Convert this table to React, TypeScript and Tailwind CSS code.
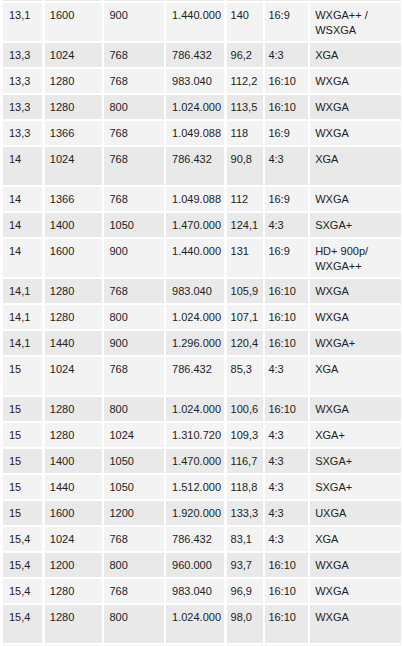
type Row = {
  cells: [string, string, string, string, string, string, string];
  tall?: boolean;
};

const rows: Row[] = [
  { cells: ['13,1', '1600', '900', '1.440.000', '140', '16:9', 'WXGA++ /\nWSXGA'], tall: true },
  { cells: ['13,3', '1024', '768', '786.432', '96,2', '4:3', 'XGA'] },
  { cells: ['13,3', '1280', '768', '983.040', '112,2', '16:10', 'WXGA'] },
  { cells: ['13,3', '1280', '800', '1.024.000', '113,5', '16:10', 'WXGA'] },
  { cells: ['13,3', '1366', '768', '1.049.088', '118', '16:9', 'WXGA'] },
  { cells: ['14', '1024', '768', '786.432', '90,8', '4:3', 'XGA'], tall: true },
  { cells: ['14', '1366', '768', '1.049.088', '112', '16:9', 'WXGA'] },
  { cells: ['14', '1400', '1050', '1.470.000', '124,1', '4:3', 'SXGA+'] },
  { cells: ['14', '1600', '900', '1.440.000', '131', '16:9', 'HD+ 900p/\nWXGA++'], tall: true },
  { cells: ['14,1', '1280', '768', '983.040', '105,9', '16:10', 'WXGA'] },
  { cells: ['14,1', '1280', '800', '1.024.000', '107,1', '16:10', 'WXGA'] },
  { cells: ['14,1', '1440', '900', '1.296.000', '120,4', '16:10', 'WXGA+'] },
  { cells: ['15', '1024', '768', '786.432', '85,3', '4:3', 'XGA'], tall: true },
  { cells: ['15', '1280', '800', '1.024.000', '100,6', '16:10', 'WXGA'] },
  { cells: ['15', '1280', '1024', '1.310.720', '109,3', '4:3', 'XGA+'] },
  { cells: ['15', '1400', '1050', '1.470.000', '116,7', '4:3', 'SXGA+'] },
  { cells: ['15', '1440', '1050', '1.512.000', '118,8', '4:3', 'SXGA+'] },
  { cells: ['15', '1600', '1200', '1.920.000', '133,3', '4:3', 'UXGA'] },
  { cells: ['15,4', '1024', '768', '786.432', '83,1', '4:3', 'XGA'] },
  { cells: ['15,4', '1200', '800', '960.000', '93,7', '16:10', 'WXGA'] },
  { cells: ['15,4', '1280', '768', '983.040', '96,9', '16:10', 'WXGA'] },
  { cells: ['15,4', '1280', '800', '1.024.000', '98,0', '16:10', 'WXGA'], tall: true },
];

// per-column left padding, measured from the screenshot
const pads = ['pl-[6px]', 'pl-[5px]', 'pl-[5px]', 'pl-[6px]', 'pl-[4px]', 'pl-[3px]', 'pl-[5px]'];

const grid =
  'grid grid-cols-[39.3px_57.2px_59.1px_58px_36.3px_42.3px_90.5px_20px] gap-x-[2.5px] pl-[3px]';

function TableRow({ row, dark }: { row: Row; dark: boolean }) {
  const bg = dark ? 'bg-[#e9e9e9]' : 'bg-[#f3f3f3]';
  return (
    <div className={`${grid} ${row.tall ? 'h-[37.6px]' : 'h-[24.1px]'} shrink-0`}>
      {row.cells.map((c, i) => (
        <div key={i} className={`${bg} ${pads[i]} pt-[5px] whitespace-pre-line`}>
          {c}
        </div>
      ))}
      <div className={bg} />
    </div>
  );
}

function EdgeRow({ dark, h }: { dark: boolean; h: string }) {
  const bg = dark ? 'bg-[#e9e9e9]' : 'bg-[#f3f3f3]';
  return (
    <div className={`${grid} ${h} shrink-0`}>
      {Array.from({ length: 8 }).map((_, i) => (
        <div key={i} className={bg} />
      ))}
    </div>
  );
}

export default function App() {
  return (
    <div className="flex h-[646px] w-[403px] flex-col gap-y-[2px] overflow-hidden bg-white font-['Liberation_Sans',Arial,sans-serif] text-[11px] leading-[15px] text-[#222]">
      <EdgeRow dark h="h-[1.3px]" />
      {rows.map((r, i) => (
        <TableRow key={i} row={r} dark={i % 2 === 1} />
      ))}
      <EdgeRow dark={false} h="h-[24px]" />
    </div>
  );
}
